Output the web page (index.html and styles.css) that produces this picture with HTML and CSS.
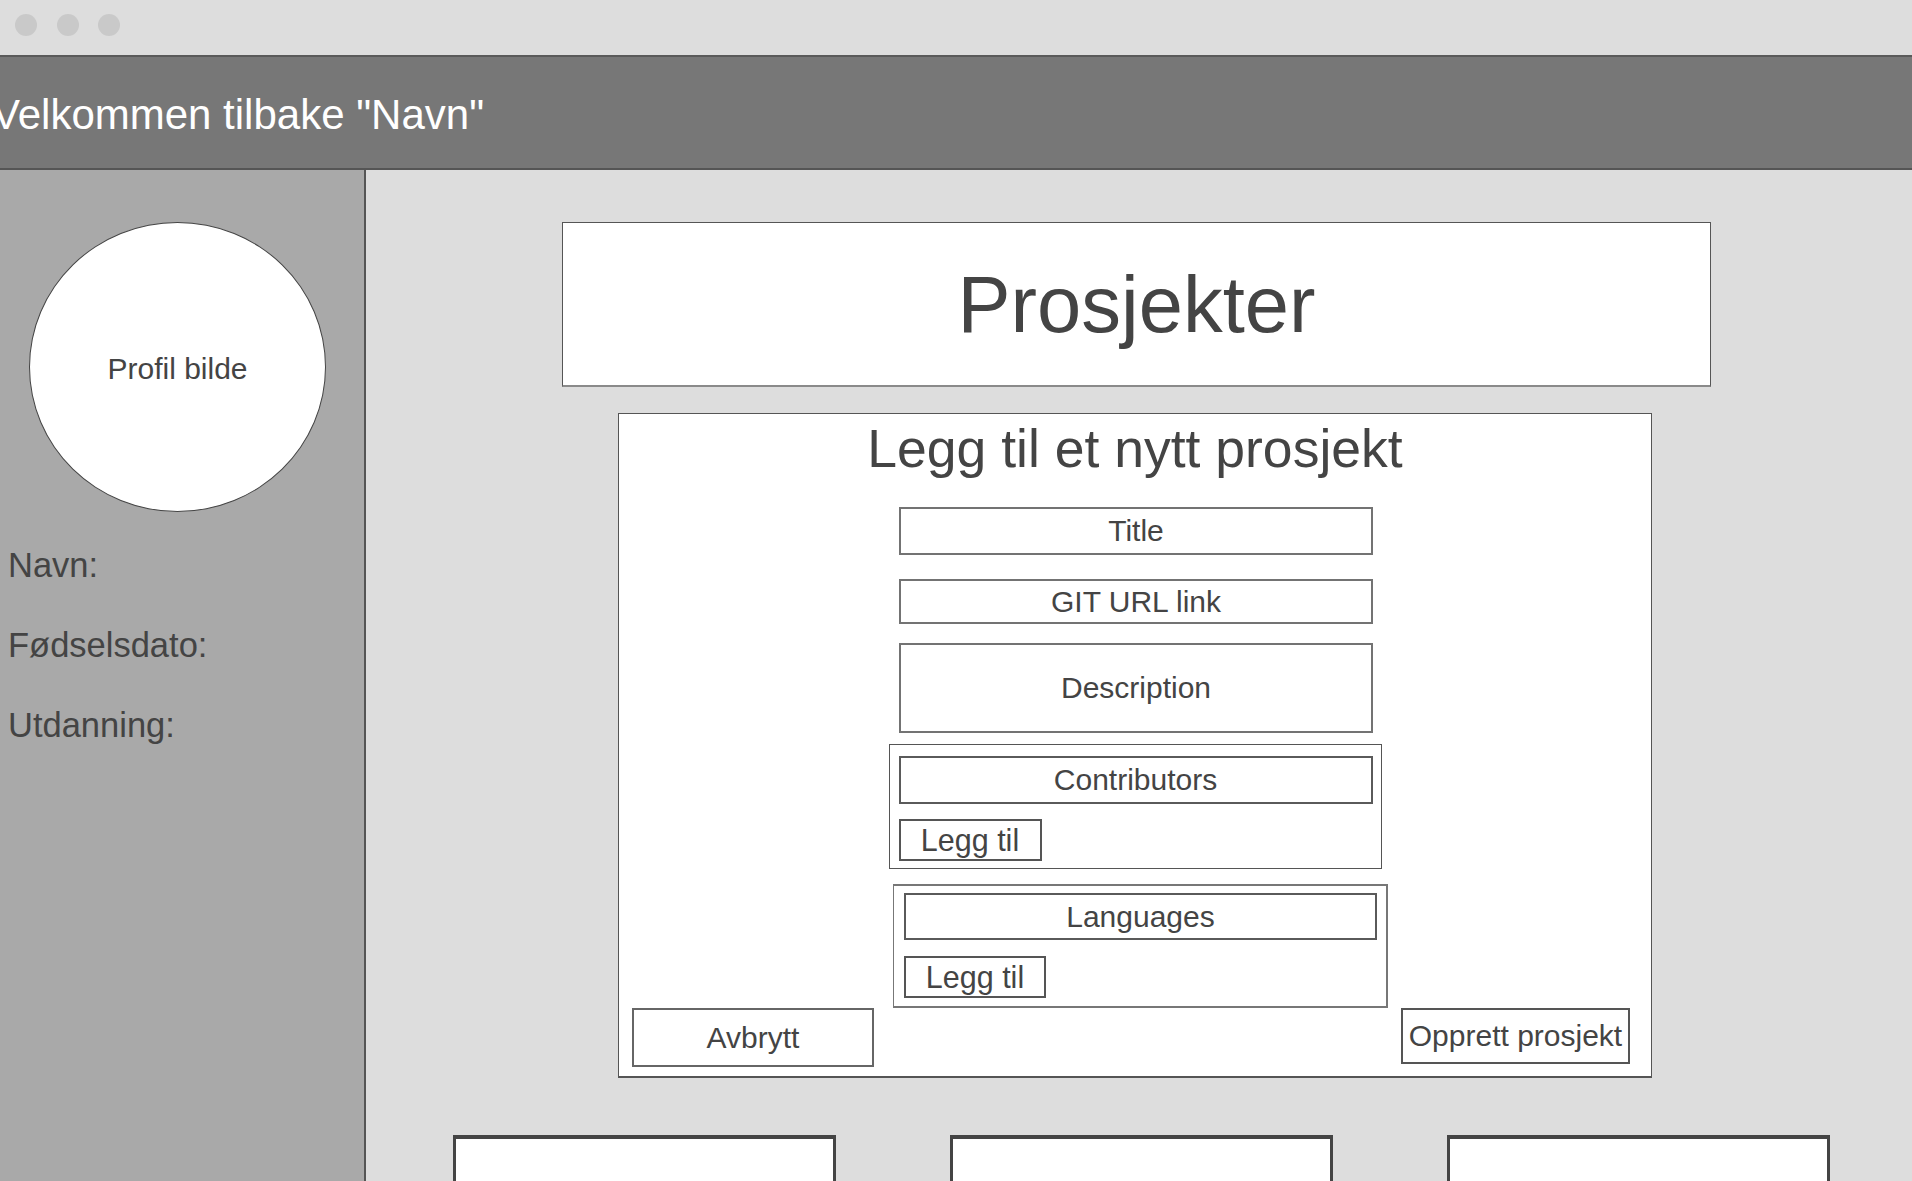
FILE: index.html
```html
<!DOCTYPE html>
<html lang="no">
<head>
<meta charset="utf-8">
<title>Prosjekter</title>
<link rel="stylesheet" href="styles.css">
</head>
<body>
<div class="window">
  <div class="titlebar">
    <span class="dot"></span>
    <span class="dot"></span>
    <span class="dot"></span>
  </div>
  <header class="header">
    <h1 class="welcome">Velkommen tilbake "Navn"</h1>
  </header>
  <div class="body">
    <aside class="sidebar">
      <div class="avatar">Profil bilde</div>
      <ul class="info">
        <li>Navn:</li>
        <li>Fødselsdato:</li>
        <li>Utdanning:</li>
      </ul>
    </aside>
    <main class="main">
      <div class="page-title">Prosjekter</div>
      <form class="new-project">
        <h2 class="form-heading">Legg til et nytt prosjekt</h2>
        <div class="field field-title">Title</div>
        <div class="field field-git">GIT URL link</div>
        <div class="field field-desc">Description</div>
        <div class="group group-contrib">
          <div class="field field-inner">Contributors</div>
          <div class="add-btn">Legg til</div>
        </div>
        <div class="group group-lang">
          <div class="field field-inner field-lang">Languages</div>
          <div class="add-btn add-btn-lang">Legg til</div>
        </div>
        <div class="actions">
          <div class="btn btn-cancel">Avbrytt</div>
          <div class="btn btn-create">Opprett prosjekt</div>
        </div>
      </form>
      <div class="cards">
        <div class="card"></div>
        <div class="card"></div>
        <div class="card"></div>
      </div>
    </main>
  </div>
</div>
</body>
</html>
```

FILE: styles.css
```css
* {
  box-sizing: border-box;
}

html, body {
  margin: 0;
  padding: 0;
  height: 100%;
  overflow: hidden;
}

body {
  font-family: "Liberation Sans", Arial, sans-serif;
  color: #444444;
  background: #dddddd;
}

.window {
  display: flex;
  flex-direction: column;
  height: 100vh;
}

.titlebar {
  height: 57px;
  flex: none;
  background: #dddddd;
  border-bottom: 2px solid #5a5a5a;
  display: flex;
  align-items: flex-start;
  gap: 19.5px;
  padding: 14px 0 0 15px;
}

.dot {
  width: 22px;
  height: 22px;
  border-radius: 50%;
  background: #c9c9c9;
}

.header {
  height: 113px;
  flex: none;
  background: #777777;
  border-bottom: 2px solid #555555;
  display: flex;
  align-items: center;
  padding-top: 4px;
  overflow: hidden;
}

.welcome {
  margin: 0 0 0 -8px;
  font-size: 42px;
  font-weight: normal;
  color: #ffffff;
  white-space: nowrap;
}

.body {
  flex: 1;
  display: flex;
  min-height: 0;
}

.sidebar {
  width: 366px;
  flex: none;
  background: #a9a9a9;
  border-right: 2px solid #555555;
  padding-top: 52px;
}

.avatar {
  margin-left: 29px;
  width: 297px;
  height: 290px;
  border: 1px solid #444444;
  border-radius: 50%;
  background: #ffffff;
  display: flex;
  align-items: center;
  justify-content: center;
  padding-top: 3px;
  font-size: 30px;
}

.info {
  list-style: none;
  margin: 13px 0 0 0;
  padding: 0 0 0 8px;
  font-size: 34.5px;
  line-height: 80px;
}

.main {
  flex: 1;
  display: flex;
  flex-direction: column;
  align-items: center;
  padding-top: 52px;
  min-width: 0;
  overflow: hidden;
}

.main > * {
  flex-shrink: 0;
}

.page-title {
  width: 1149px;
  height: 165px;
  margin-right: 5px;
  background: #ffffff;
  border: 1px solid #555555;
  border-bottom: 2px solid #8a8a8a;
  display: flex;
  align-items: center;
  justify-content: center;
  font-size: 79.5px;
  padding-top: 2px;
}

.new-project {
  margin: 26px 8px 0 0;
  width: 1034px;
  height: 665px;
  background: #ffffff;
  border: 1px solid #555555;
  border-bottom-width: 2px;
  display: flex;
  flex-direction: column;
  align-items: center;
  padding: 5px 0 0 0;
}

.new-project > * {
  flex-shrink: 0;
}

.form-heading {
  margin: 0;
  font-size: 53.5px;
  font-weight: normal;
  line-height: 60px;
  white-space: nowrap;
}

.field {
  width: 474px;
  border: 2px solid #737373;
  background: #ffffff;
  display: flex;
  align-items: center;
  justify-content: center;
  font-size: 30px;
  margin-left: 2px;
}

.field-title {
  height: 48px;
  margin-top: 28px;
}

.field-git {
  height: 45px;
  margin-top: 24px;
}

.field-desc {
  height: 90px;
  margin-top: 19px;
}

.group {
  border: 1px solid #555555;
  display: flex;
  flex-direction: column;
  align-items: flex-start;
}

.group-contrib {
  width: 493px;
  height: 125px;
  margin-top: 11px;
  padding: 11px 0 0 9px;
}

.group-lang {
  width: 495px;
  height: 124px;
  margin: 15px 0 0 11px;
  padding: 7px 0 0 10px;
  border-color: #777777;
  border-width: 2px 2px 2px 1px;
}

.field-inner {
  height: 48px;
  margin-left: 0;
  border-color: #5a5a5a;
}

.field-lang {
  width: 473px;
  height: 47px;
}

.add-btn {
  width: 143px;
  height: 42px;
  margin-top: 15px;
  border: 2px solid #555555;
  display: flex;
  align-items: center;
  justify-content: center;
  font-size: 30.5px;
}

.add-btn-lang {
  width: 142px;
  margin-top: 16px;
}

.actions {
  align-self: stretch;
  display: flex;
  justify-content: space-between;
  align-items: flex-start;
  padding: 0 21px 0 13px;
}

.btn {
  border: 2px solid #666666;
  display: flex;
  align-items: center;
  justify-content: center;
  font-size: 30px;
  white-space: nowrap;
}

.btn-cancel {
  width: 242px;
  height: 59px;
}

.btn-create {
  width: 229px;
  height: 56px;
  border-color: #555555;
}

.cards {
  display: flex;
  gap: 114px;
  margin: 57px 0 0 5px;
}

.card {
  width: 383px;
  height: 200px;
  background: #ffffff;
  border: 3px solid #444444;
  border-top-width: 4px;
}
```
